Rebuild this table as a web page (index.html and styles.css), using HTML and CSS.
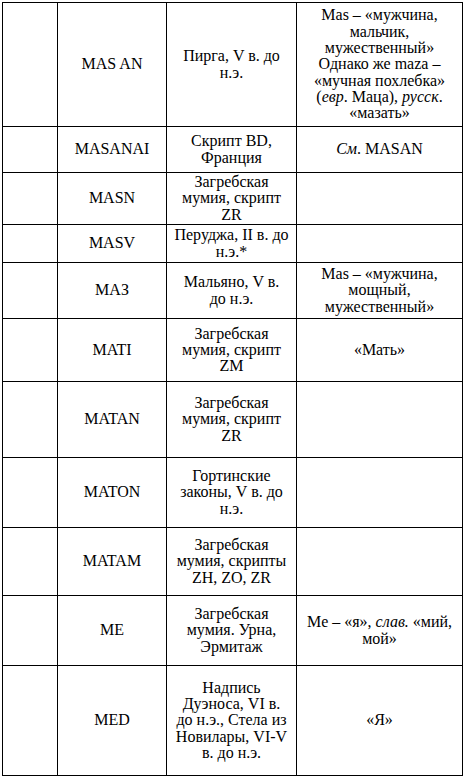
FILE: index.html
```html
<!DOCTYPE html>
<html lang="ru">
<head>
<meta charset="utf-8">
<title>Таблица</title>
<link rel="stylesheet" href="styles.css">
</head>
<body>
<table class="lex">
  <colgroup>
    <col class="c1"><col class="c2"><col class="c3"><col class="c4">
  </colgroup>
  <tbody>
    <tr class="r1">
      <td></td>
      <td>MAS AN</td>
      <td>Пирга, V в. до<br>н.э.</td>
      <td>Mas – «мужчина,<br>мальчик,<br>мужественный»<br>Однако же maza –<br>«мучная похлебка»<br>(<i>евр</i>. Маца), <i>русск</i>.<br>«мазать»</td>
    </tr>
    <tr class="r2">
      <td></td>
      <td>MASANAI</td>
      <td>Скрипт BD,<br>Франция</td>
      <td><i>См</i>. MASAN</td>
    </tr>
    <tr class="r3">
      <td></td>
      <td>MASN</td>
      <td>Загребская<br>мумия, скрипт<br>ZR</td>
      <td></td>
    </tr>
    <tr class="r4">
      <td></td>
      <td>MASV</td>
      <td>Перуджа, II в. до<br>н.э.*</td>
      <td></td>
    </tr>
    <tr class="r5">
      <td></td>
      <td>MAЗ</td>
      <td>Мальяно, V в.<br>до н.э.</td>
      <td>Mas – «мужчина,<br>мощный,<br>мужественный»</td>
    </tr>
    <tr class="r6">
      <td></td>
      <td>MATI</td>
      <td>Загребская<br>мумия, скрипт<br>ZM</td>
      <td>«Мать»</td>
    </tr>
    <tr class="r7">
      <td></td>
      <td>MATAN</td>
      <td>Загребская<br>мумия, скрипт<br>ZR</td>
      <td></td>
    </tr>
    <tr class="r8">
      <td></td>
      <td>MATON</td>
      <td>Гортинские<br>законы, V в. до<br>н.э.</td>
      <td></td>
    </tr>
    <tr class="r9">
      <td></td>
      <td>MATAM</td>
      <td>Загребская<br>мумия, скрипты<br>ZH, ZO, ZR</td>
      <td></td>
    </tr>
    <tr class="r10">
      <td></td>
      <td>ME</td>
      <td>Загребская<br>мумия. Урна,<br>Эрмитаж</td>
      <td>Me – «я», <i>слав.</i> «мий,<br>мой»</td>
    </tr>
    <tr class="r11">
      <td></td>
      <td>MED</td>
      <td>Надпись<br>Дуэноса, VI в.<br>до н.э., Стела из<br>Новилары, VI-V<br>в. до н.э.</td>
      <td>«Я»</td>
    </tr>
  </tbody>
</table>
</body>
</html>
```

FILE: styles.css
```css
html, body {
  margin: 0;
  padding: 0;
  background: #ffffff;
}

body {
  font-family: "Liberation Serif", "Times New Roman", serif;
  font-size: 16px;
  line-height: 16.3px;
  color: #000;
}

.lex {
  margin: 2px 0 0 2px;
  width: 461px;
  border-collapse: collapse;
  table-layout: fixed;
  font-family: "Liberation Serif", "Times New Roman", serif;
}

.c1 { width: 55px; }
.c2 { width: 109px; }
.c3 { width: 130px; }
.c4 { width: 166px; }

.lex td {
  border: 1px solid #000;
  padding: 0 2px;
  text-align: center;
  vertical-align: middle;
}

.r1 { height: 124px; }
.r2 { height: 46px; }
.r3 { height: 52px; }
.r4 { height: 38px; }
.r5 { height: 56px; }
.r6 { height: 63px; }
.r7 { height: 76px; }
.r8 { height: 70px; }
.r9 { height: 68px; }
.r10 { height: 70px; }
.r11 { height: 110px; }
```
